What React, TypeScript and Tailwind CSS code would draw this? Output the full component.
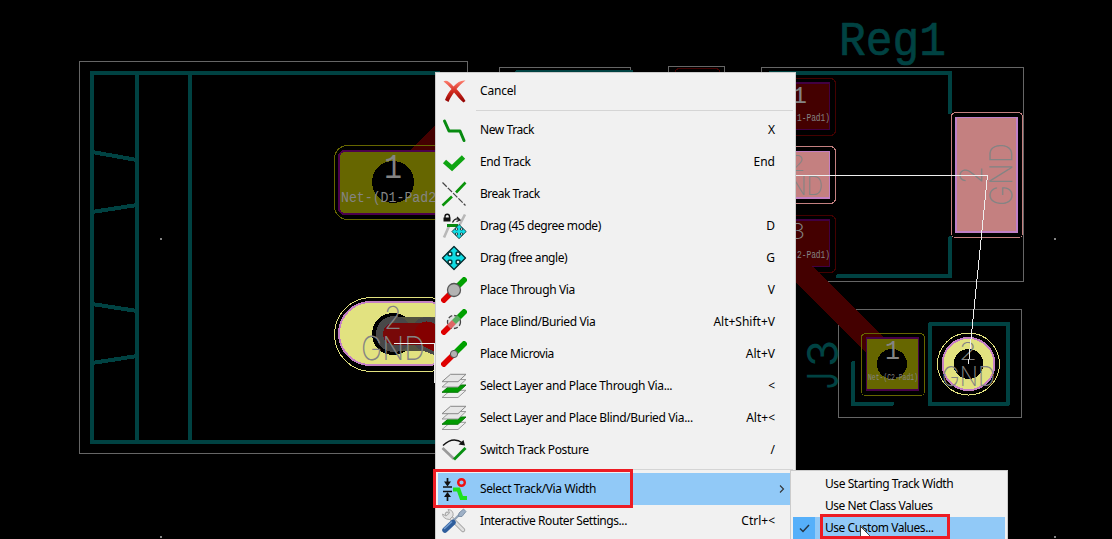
import type { ReactNode } from "react";

const TEAL = "#004242";
const GREY = "#848484";
const GREEN = "#009a00";

type LabelProps = {
  x: number;
  y: number;
  size: number;
  width: number;
  children: string;
  color?: string;
  turned?: boolean;
  stretch?: number;
  family?: string;
  weight?: number;
  outline?: number;
};

function Label({ x, y, size, width, children, color = GREY, turned, stretch = 1, family = "Inter", weight = 200, outline = 0 }: LabelProps) {
  return (
    <text
      transform={`translate(${x} ${y}) rotate(${turned ? -90 : 0}) scale(1 ${stretch})`}
      fontFamily={`"${family}", sans-serif`}
      fontWeight={weight}
      fontSize={size}
      textLength={width}
      lengthAdjust="spacingAndGlyphs"
      fill={color}
      stroke={outline ? color : "none"}
      strokeWidth={outline}
      strokeLinejoin="round"
    >
      {children}
    </text>
  );
}

function Board() {
  return (
    <svg className="block" width="1112" height="539" viewBox="0 0 1112 539" fill="none">
      <g shapeRendering="crispEdges">
        <path d="M467.5 453.5H79.5V61.5H467.5V72M499.5 72V67.5H630.5V72M668.5 72V66.5H724.5V72M761.5 72V67.5H1023.5V281.5H796" stroke="#666" />
        <path d="M838.5 309.5H1021.5V417.5H838.5Z" stroke="#666" />
        <path d="M675 72Q676 68.5 680 68.5H715Q719 68.5 720 72" stroke="#440000" />
        <g stroke={TEAL} strokeWidth="4">
          <path d="M440 73H92V442H440M137 73V442M190 73V442M92 152L137 160M92 212L137 205M92 304L137 311M92 363L137 356" />
          <path d="M517 72H631M770 73H950V112M950 238V276H838" strokeLinecap="round" />
          <path d="M853 363V404H892M930 324H1008V404H930Z" strokeLinecap="round" strokeLinejoin="round" />
        </g>
        <path d="M160 238h2v2h-2zM1054 238h2v2h-2zM160 536h2v2h-2zM1054 536h2v2h-2z" fill="#848484" />

        {/* copper tracks */}
        <path d="M409 151L440 121V151Z" fill="#440000" />
        <path d="M790 245L812 266L890 344L877 364L790 277Z" fill="#440000" />

        {/* left connector, pad 1 */}
        <rect x="334.5" y="145.5" width="120" height="74" rx="13" stroke="#666600" />
        <rect x="339" y="151" width="120" height="63" rx="6" fill="#666600" stroke="#4d004d" strokeWidth="2" />
        <circle cx="393" cy="182" r="21" fill="#000" />

        {/* left connector, pad 2 */}
        <rect x="334.5" y="297.5" width="130" height="74" rx="37" stroke="#e2e280" />
        <rect x="339" y="302" width="120" height="63" rx="31.5" fill="#e2e280" stroke="#c480c4" strokeWidth="2" />
        <circle cx="393" cy="334" r="21" fill="#000" />
        <path d="M394 317H440V351H394Z" fill="#545440" />
        <circle cx="394" cy="334" r="18" fill="#484848" />
        <path d="M427 334L460 347" stroke="#484848" strokeWidth="34" strokeLinecap="round" />
        <path d="M394 334H427" stroke="#780808" strokeWidth="22" strokeLinecap="round" />
        <path d="M427 334L460 350" stroke="#840000" strokeWidth="25" strokeLinecap="round" />

        {/* regulator pads */}
        <g stroke="#440000">
          <rect x="780.5" y="78.5" width="55" height="57" rx="5" />
          <rect x="780.5" y="215.5" width="55" height="57" rx="5" />
        </g>
        <rect x="780.5" y="146.5" width="55" height="57" rx="5" stroke="#c48080" />
        <path d="M780 82H830V130H780Z" fill="#420042" />
        <path d="M780 84H829V129H780Z" fill="#440000" />
        <path d="M780 219H830V267H780Z" fill="#420042" />
        <path d="M780 221H829V266H780Z" fill="#440000" />
        <path d="M780 258L803 258L822 277L798 281Z" fill="#440000" />
        <path d="M780 151H830V199H780Z" fill="#c480c4" />
        <path d="M780 152H829V197H780Z" fill="#c48080" />
        <rect x="951.5" y="112.5" width="71" height="125" rx="4" stroke="#c48080" />
        <path d="M955 117H1018V233H955Z" fill="#c080c8" />
        <path d="M957 118H1016V231H957Z" fill="#c48080" />

        {/* J3 pads */}
        <rect x="861.5" y="333.5" width="63" height="62" rx="4" stroke="#666600" />
        <path d="M866 337H919V391H866Z" fill="#480048" />
        <path d="M867 339H918V389H867Z" fill="#666600" />
        <circle cx="892" cy="364" r="15" fill="#000" />
        <circle cx="968.5" cy="364" r="31" stroke="#e2e280" />
        <circle cx="968.5" cy="364" r="26" fill="#e2e280" stroke="#c480c4" strokeWidth="2" />
        <circle cx="968.5" cy="364" r="15" fill="#000" />
      </g>

      <Label x={839} y={55} size={49} width={107} color={TEAL} family="Liberation Mono" weight={400} outline={0.7}>Reg1</Label>
      <Label x={838} y={389} size={43} width={17} color={TEAL} weight={400} turned>J</Label>
      <Label x={838} y={367} size={43} width={27} color={TEAL} weight={400} turned>3</Label>

      <Label x={384} y={178} size={30} width={18} stretch={1.18} family="Liberation Mono" weight={400}>1</Label>
      <Label x={341} y={202} size={12} width={103} stretch={1.15} family="Liberation Mono" weight={400}>Net-(D1-Pad2)</Label>
      <Label x={384} y={329} size={32} width={18}>2</Label>
      <Label x={361} y={360} size={33} width={64}>GND</Label>
      <Label x={982} y={184} size={31} width={18} turned>2</Label>
      <Label x={1012} y={206} size={31} width={63} turned>GND</Label>
      <Label x={792} y={103} size={23} width={15} family="Liberation Mono" weight={400}>1</Label>
      <Label x={797} y={121} size={9} width={33} stretch={1.15} family="Liberation Mono" weight={400}>1-Pad1)</Label>
      <Label x={790} y={171} size={22} width={15}>2</Label>
      <Label x={772} y={195} size={25} width={51}>GND</Label>
      <Label x={790} y={239} size={22} width={15}>3</Label>
      <Label x={797} y={258} size={9} width={33} stretch={1.15} family="Liberation Mono" weight={400}>2-Pad1)</Label>
      <Label x={885} y={359} size={26} width={15} stretch={1.05} family="Liberation Mono" weight={400}>1</Label>
      <Label x={868} y={380} size={8} width={50} stretch={1.1} family="Liberation Mono" weight={400}>Net-(C2-Pad1)</Label>
      <Label x={959} y={360} size={25} width={18}>2</Label>
      <Label x={942} y={386} size={27} width={53}>GND</Label>
      <path d="M796 175.5H987.5L968.5 364M394 343.5H434.5V383" stroke="#eee" shapeRendering="crispEdges" />
    </svg>
  );
}

function Icon({ children }: { children: ReactNode }) {
  return (
    <svg className="block shrink-0" width="26" height="26" viewBox="0 0 26 26" fill="none">
      {children}
    </svg>
  );
}

function CancelIcon() {
  return (
    <Icon>
      <defs>
        <linearGradient id="cancel" x1="0" y1="0" x2="0" y2="1">
          <stop offset="0" stopColor="#ff8070" />
          <stop offset=".5" stopColor="#d22c20" />
          <stop offset="1" stopColor="#8e0000" />
        </linearGradient>
      </defs>
      <path d="M2.500 3.500C5 1.500 8 3 12.500 8.500C16.500 4 20 2 24.500 2.500C21 5 18 8 15.500 11C19 14.500 22 18.500 24.500 23L22.500 24.500C19 21.500 16 18 13 14.500C10.500 18 9 20.500 7.500 24L4 22C5.500 18 7.500 14 10.500 11C8 8 5.500 6 2.500 3.500Z" fill="url(#cancel)" />
    </Icon>
  );
}

function NewTrackIcon() {
  return (
    <Icon>
      <path d="M3.500 4L8 14H19L23 23.500" stroke="#078a10" strokeWidth="3" strokeLinecap="round" strokeLinejoin="round" />
    </Icon>
  );
}

function EndTrackIcon() {
  return (
    <Icon>
      <path d="M3.500 12.500L11 19L22.500 8" stroke="#0fa512" strokeWidth="4.800" />
    </Icon>
  );
}

function BreakTrackIcon() {
  return (
    <Icon>
      <path d="M1.500 24.500L11 15.500M15 11.500L24.500 1.500" stroke="#0a930a" strokeWidth="2.600" />
      <path d="M1.500 1.500L24.500 24.500" stroke="#444" strokeWidth="1.200" strokeDasharray="6 1.500" />
    </Icon>
  );
}

function Arrows() {
  return (
    <>
      <path d="M13 1.500L24.500 13L13 24.500L1.500 13Z" fill="#10dce4" stroke="#052a2c" strokeWidth="1.300" strokeLinejoin="round" />
      <g fill="#f1f1f1" stroke="#053336" strokeWidth="1.500">
        <circle cx="9" cy="9" r="2" />
        <circle cx="17" cy="9" r="2" />
        <circle cx="9" cy="17" r="2" />
        <circle cx="17" cy="17" r="2" />
      </g>
      <path d="M13 5V21M5 13H21" stroke="#10dce4" strokeWidth="2.500" />
    </>
  );
}

function DragAngleIcon() {
  return (
    <Icon>
      <path d="M3 24.500L8.500 12M18.500 12L24 1.500" stroke="#b8b8b8" strokeWidth="2.600" />
      <path d="M6 12.500H17" stroke="#078a10" strokeWidth="3" />
      <path d="M4 5V3.500a2 2 0 0 1 4.500 0V5" stroke="#111" strokeWidth="1.400" />
      <path d="M2.500 4.500H9.500V8.500H2.500Z" fill="#111" />
      <path d="M11.500 9.500Q14 4.500 18 6.500M16 4L19 7L15.500 8.500" stroke="#222" strokeWidth="1.300" />
      <g transform="translate(10 10.500) scale(.62)">
        <Arrows />
      </g>
    </Icon>
  );
}

function ViaIcon({ kind }: { kind: "through" | "blind" | "micro" }) {
  return (
    <Icon>
      <path d="M1 25L13 13" stroke="#de0000" strokeWidth="5.500" />
      <path d="M13 13L25 1" stroke="#00a000" strokeWidth="5.500" />
      {kind === "through" && <circle cx="13" cy="13" r="6.500" fill="#b3b3b3" stroke="#555" strokeWidth="1.300" />}
      {kind === "blind" && (
        <>
          <circle cx="13" cy="13" r="6.500" fill="#d0d0d0" fillOpacity=".5" stroke="#444" strokeWidth="1.300" strokeDasharray="4 2" />
          <path d="M8 18L13 13" stroke="#e06666" strokeWidth="5" />
          <path d="M13 13L18 8" stroke="#58ad60" strokeWidth="5" />
        </>
      )}
      {kind === "micro" && <circle cx="13" cy="13" r="3.600" fill="#b3b3b3" stroke="#555" />}
    </Icon>
  );
}

function LayersIcon() {
  return (
    <Icon>
      <g strokeWidth="1" strokeLinejoin="round">
        <path d="M1 24.500L9.500 17.300H25L17 24.500Z" fill="#eee" stroke="#999" />
        <path d="M1 19.300L9.500 12H25L17 19.300Z" fill={GREEN} stroke="#087808" />
        <path d="M1 14L9.500 6.500H25L17 14Z" fill="#e6e6e6" stroke="#999" />
        <path d="M1 8.700L9.500 1.300H25L17 8.700Z" fill="#e6e6e6" stroke="#888" />
      </g>
    </Icon>
  );
}

function PostureIcon() {
  return (
    <Icon>
      <path d="M1.500 11L13 22" stroke="#999" strokeWidth="2.600" />
      <path d="M13 22.500L24.500 11" stroke="#078f10" strokeWidth="2.800" />
      <path d="M2 8.500Q12 -1 21.500 6" stroke="#111" strokeWidth="1.400" />
      <path d="M24 8.500L17.500 7.500L22.500 3Z" fill="#111" />
    </Icon>
  );
}

function WidthIcon() {
  return (
    <Icon>
      <path d="M2 11H11M2 15.500H11M6.500 2V7M6.500 19V25" stroke="#111" strokeWidth="1.700" />
      <path d="M3 5.500H10L6.500 10.500ZM3 21H10L6.500 16Z" fill="#111" />
      <circle cx="20.500" cy="6.500" r="3.300" stroke="#f01010" strokeWidth="2.400" />
      <path d="M12 13.500H17.500L20.500 22H26" stroke="#1ee01e" strokeWidth="4" />
    </Icon>
  );
}

function SettingsIcon() {
  return (
    <Icon>
      <path d="M6 6L22 22" stroke="#9c9c9c" strokeWidth="4.500" strokeLinecap="round" />
      <path d="M6 6L22 22" stroke="#e0e0e0" strokeWidth="2.800" strokeLinecap="round" />
      <path d="M7 1.500Q13 2 12 8L8.500 11.500Q2 11 1.500 6L5 8L8.500 5Z" fill="#e4e4e4" stroke="#a8a8a8" />
      <path d="M11 14L20 5" stroke="#8ea0b5" strokeWidth="2.200" />
      <path d="M18 5L22.500 1L25 3.500L21 8.500L17.500 8.500Z" fill="#9eb0c6" stroke="#6f849c" strokeWidth=".8" />
      <path d="M4 22L12 14.500" stroke="#2e5d9c" strokeWidth="5.500" strokeLinecap="round" />
      <path d="M3.500 20.500L10.500 14" stroke="#729bce" strokeWidth="1.600" strokeLinecap="round" />
    </Icon>
  );
}

type Entry = { label: string; keys?: string; icon: ReactNode; spacing?: string; submenu?: boolean };

const commands: Entry[] = [
  { label: "New Track", keys: "X", icon: <NewTrackIcon />, spacing: "tracking-[-0.42px]" },
  { label: "End Track", keys: "End", icon: <EndTrackIcon />, spacing: "tracking-[-0.42px]" },
  { label: "Break Track", icon: <BreakTrackIcon />, spacing: "tracking-[-0.5px]" },
  { label: "Drag (45 degree mode)", keys: "D", icon: <DragAngleIcon />, spacing: "tracking-[-0.45px]" },
  { label: "Drag (free angle)", keys: "G", icon: <Icon><Arrows /></Icon>, spacing: "tracking-[-0.45px]" },
  { label: "Place Through Via", keys: "V", icon: <ViaIcon kind="through" /> },
  { label: "Place Blind/Buried Via", keys: "Alt+Shift+V", icon: <ViaIcon kind="blind" /> },
  { label: "Place Microvia", keys: "Alt+V", icon: <ViaIcon kind="micro" />, spacing: "tracking-[-0.45px]" },
  { label: "Select Layer and Place Through Via...", keys: "<", icon: <LayersIcon /> },
  { label: "Select Layer and Place Blind/Buried Via...", keys: "Alt+<", icon: <LayersIcon /> },
  { label: "Switch Track Posture", keys: "/", icon: <PostureIcon /> },
];

function MenuRow({ label, keys, icon, spacing = "tracking-[-0.37px]", submenu }: Entry) {
  return (
    <div className={`flex h-8 shrink-0 items-center pl-[3px] ${submenu ? "bg-[#91c9f7] pr-2" : "pr-[18px]"}`}>
      {icon}
      <span className={`ml-[13px] flex-1 whitespace-nowrap ${spacing}`}>{label}</span>
      {keys && <span className="whitespace-nowrap">{keys}</span>}
      {submenu && (
        <svg width="6" height="10" viewBox="0 0 6 10" fill="none" stroke="#333" strokeWidth="1.100">
          <path d="M1 1.500L4.500 5L1 8.500" />
        </svg>
      )}
    </div>
  );
}

function Separator() {
  return (
    <div className="flex h-[7px] shrink-0 items-center pl-[38px]">
      <div className="h-px flex-1 bg-[#d5d5d5]" />
    </div>
  );
}

export default function App() {
  return (
    <div className="relative h-[539px] w-[1112px] overflow-hidden bg-black font-['Noto_Sans',sans-serif] text-[12px] leading-4 text-black">
      <Board />

      <div className="absolute top-[72px] left-[435px] flex h-[480px] w-[361px] flex-col border border-[#ccc] bg-[#f1f1f1] p-[2px]">
        <MenuRow label="Cancel" icon={<CancelIcon />} spacing="tracking-[-0.2px]" />
        <Separator />
        {commands.map((entry) => (
          <MenuRow key={entry.label} {...entry} />
        ))}
        <Separator />
        <MenuRow label="Select Track/Via Width" icon={<WidthIcon />} submenu />
        <MenuRow label="Interactive Router Settings..." keys="Ctrl+<" icon={<SettingsIcon />} spacing="tracking-[-0.43px]" />
      </div>

      <div className="absolute top-[470px] left-[790px] flex h-[90px] w-[218px] flex-col border border-[#ccc] bg-[#f1f1f1] p-[2px]">
        <div className="flex h-[22px] items-center pl-8 tracking-[-0.43px]">Use Starting Track Width</div>
        <div className="flex h-[22px] items-center pl-8 tracking-[-0.45px]">Use Net Class Values</div>
        <div className="flex h-[22px] items-center bg-[#91c9f7]">
          <div className="flex h-full w-[22px] items-center justify-center bg-[#56b0fa]">
            <svg width="11" height="9" viewBox="0 0 11 9" fill="none" stroke="#243746" strokeWidth="1.500">
              <path d="M1 4.500L4 7.500L10 1" />
            </svg>
          </div>
          <span className="ml-[10px] tracking-[-0.45px]">Use Custom Values...</span>
        </div>
      </div>

      <div className="absolute top-[469px] left-[433px] h-[39px] w-[200px] border-3 border-[#ed1c24]" />
      <svg className="absolute top-[526px] left-[860px]" width="12" height="19" viewBox="0 0 12 19">
        <path d="M.5 .5V16L4 12.500L6.500 18L9 17L6.500 11.500H11.500Z" fill="#fff" stroke="#222" strokeWidth=".8" />
      </svg>
      <div className="absolute top-[514px] left-[820px] h-[25px] w-[130px] border-3 border-[#ed1c24]" />
    </div>
  );
}
